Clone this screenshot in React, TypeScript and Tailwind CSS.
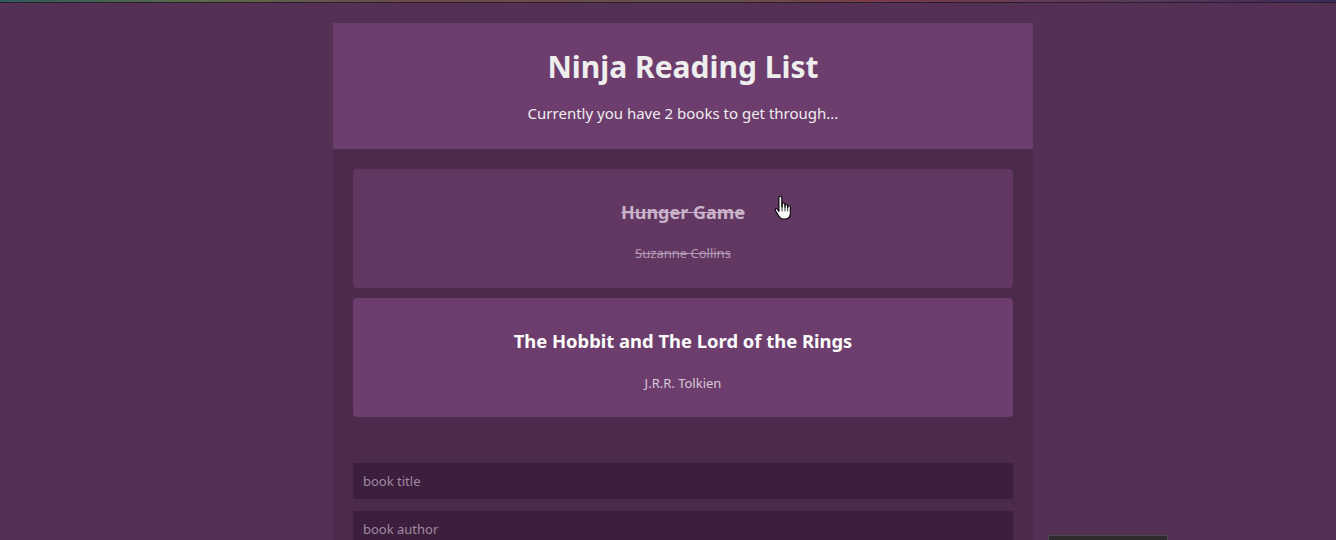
import React from "react";

const font = { fontFamily: '"Segoe UI", "Noto Sans", sans-serif' };

function HandCursor() {
  return (
    <svg width="17" height="26" viewBox="0 0 14 22" className="absolute left-[774px] top-[196px]">
      <path
        d="M4 1.5c0-.8.6-1.3 1.2-1.3S6.4.7 6.4 1.5V9h.4V7c0-.7.5-1.1 1.1-1.1S9 6.3 9 7v2.4h.3V8.2c0-.7.5-1 1-1s1 .4 1 1v1.6h.3v-.6c0-.6.5-1 1-1s1 .4 1 1v5.5c0 2.6-1.5 4.8-4.2 4.8H7.6c-1.6 0-2.6-.8-3.4-2.2L1.1 12.6c-.4-.7-.2-1.3.3-1.6.5-.3 1.1-.1 1.5.4L4 13z"
        fill="#fff"
        stroke="#000"
        strokeWidth="0.9"
        strokeLinejoin="round"
      />
      <path d="M6.6 9v4M9.1 9.5V13M11.4 10V13" stroke="#000" strokeWidth="0.7" />
    </svg>
  );
}

export default function App() {
  return (
    <div className="relative w-[1336px] h-[540px] overflow-hidden bg-[#543054]" style={font}>
      <div className="h-[2px] bg-[linear-gradient(90deg,#2f5a5a,#5a6a4a_15%,#6a4a4a_30%,#6a4e4e_55%,#7a3a4a_65%,#5a3a5a_85%,#3a2a5a)]" />
      <div className="h-px bg-[#2a1f2a]" />
      <div className="ml-[333px] mt-[20px] w-[700px]">
        <header className="h-[126px] bg-[#6d3d6d] flex flex-col items-center pt-[25px]">
          <h1 className="text-[30px] font-bold text-[#eeeeee] leading-[38px]">Ninja Reading List</h1>
          <p className="mt-[17px] text-[15px] text-[#eeeeee] leading-[20px]">Currently you have 2 books to get through...</p>
        </header>
        <main className="bg-[#4b2a4b] px-[20px] pt-[20px] pb-[40px]">
          <ul className="flex flex-col gap-[10px]">
            <li className="h-[119px] rounded-[4px] bg-[#623762] flex flex-col items-center pt-[31px]">
              <h3 className="text-[18px] font-bold text-[#c9b3c9] line-through leading-[24px]">Hunger Game</h3>
              <p className="mt-[20px] text-[13px] text-[#b49ab4] line-through leading-[18px]">Suzanne Collins</p>
            </li>
            <li className="h-[119px] rounded-[4px] bg-[#6d3d6d] flex flex-col items-center pt-[31px]">
              <h3 className="text-[18.4px] font-bold text-[#ffffff] leading-[24px]">The Hobbit and The Lord of the Rings</h3>
              <p className="mt-[21px] text-[13px] text-[#d8c8d8] leading-[18px]">J.R.R. Tolkien</p>
            </li>
          </ul>
          <form className="mt-[46px] flex flex-col gap-[12px]">
            <input
              placeholder="book title"
              className="h-[36px] bg-[#3c1f3c] px-[10px] text-[13px] text-[#eee] placeholder:text-[#a08aa0] outline-none"
            />
            <input
              placeholder="book author"
              className="h-[36px] bg-[#3c1f3c] px-[10px] text-[13px] text-[#eee] placeholder:text-[#a08aa0] outline-none"
            />
          </form>
        </main>
      </div>
      <div className="absolute left-[1048px] top-[535px] w-[120px] h-[20px] bg-[#2e2a2e] border border-[#4e464e]" />
      <HandCursor />
    </div>
  );
}
